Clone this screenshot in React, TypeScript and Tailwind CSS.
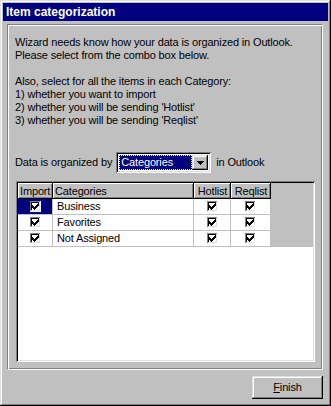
import React from "react";

const raised =
  "shadow-[inset_-1px_-1px_#000,inset_1px_1px_#dfdfdf,inset_-2px_-2px_#808080,inset_2px_2px_#fff]";
const sunken =
  "shadow-[inset_1px_1px_#808080,inset_-1px_-1px_#fff,inset_2px_2px_#000,inset_-2px_-2px_#dfdfdf]";

const Check = () => (
  <svg width="11" height="11" viewBox="0 0 11 11" shapeRendering="crispEdges">
    <rect x="0" y="0" width="11" height="11" fill="#fff" />
    <rect x="0" y="0" width="10" height="1" fill="#808080" />
    <rect x="0" y="0" width="1" height="10" fill="#808080" />
    <rect x="1" y="1" width="8" height="1" fill="#000" />
    <rect x="1" y="1" width="1" height="8" fill="#000" />
    <rect x="9" y="1" width="1" height="9" fill="#dfdfdf" />
    <rect x="1" y="9" width="9" height="1" fill="#dfdfdf" />
    <g fill="#000">
      <rect x="8" y="2" width="1" height="1" />
      <rect x="7" y="3" width="2" height="1" />
      <rect x="2" y="4" width="1" height="1" />
      <rect x="6" y="4" width="3" height="1" />
      <rect x="2" y="5" width="2" height="1" />
      <rect x="5" y="5" width="3" height="1" />
      <rect x="2" y="6" width="5" height="1" />
      <rect x="3" y="7" width="3" height="1" />
      <rect x="4" y="8" width="1" height="1" />
    </g>
  </svg>
);

const rows = ["Business", "Favorites", "Not Assigned"];

const Header = ({ label, w, center }: { label: string; w: string; center?: boolean }) => (
  <div className={`${w} h-[16px] bg-[#c0c0c0] shadow-[inset_-1px_-1px_#000,inset_1px_1px_#fff,inset_-2px_-2px_#808080] flex items-center ${center ? "justify-center" : "pl-[2px]"}`}>
    {label}
  </div>
);

export default function App() {
  return (
    <div
      className={`w-[331px] h-[406px] bg-[#c0c0c0] p-[3px] flex flex-col text-[11px] leading-[13px] tracking-[-0.15px] text-black ${raised}`}
      style={{ fontFamily: '"Liberation Sans", Arial, sans-serif' }}
    >
      <div className="h-[18px] bg-[#000080] text-white font-bold text-[12px] tracking-normal flex items-center pl-[3px]">
        Item categorization
      </div>

      <div className="mt-[3px] ml-[4px] mr-[5px] h-[346px] border border-[#808080] border-r-white border-b-white shadow-[inset_1px_1px_#fff,inset_-1px_-1px_#808080] pt-[11px] px-[7px] flex flex-col">
        <p>
          Wizard needs know how your data is organized in Outlook.
          <br />
          Please select from the combo box below.
        </p>
        <p className="mt-[13px]">
          Also, select for all the items in each Category:
          <br />
          1) whether you want to import
          <br />
          2) whether you will be sending 'Hotlist'
          <br />
          3) whether you will be sending 'Reqlist'
        </p>

        <div className="mt-[25px] flex items-center gap-[4px]">
          <span>Data is organized by</span>
          <div className={`w-[95px] h-[21px] bg-white p-[3px] flex ${sunken}`}>
            <div className="flex-1 bg-[#000080] text-white border border-dotted border-[#ffff80] flex items-center pl-[1px]">
              Categories
            </div>
            <div className="w-[16px] bg-[#c0c0c0] flex items-center justify-center shadow-[inset_-1px_-1px_#000,inset_1px_1px_#dfdfdf,inset_-2px_-2px_#808080,inset_2px_2px_#fff]">
              <svg width="7" height="4" viewBox="0 0 7 4" shapeRendering="crispEdges">
                <polygon points="0,0 7,0 3.5,4" fill="#000" />
              </svg>
            </div>
          </div>
          <span className="ml-[1px]">in Outlook</span>
        </div>

        <div className={`mt-[8px] ml-[1px] h-[181px] bg-white p-[2px] flex flex-col ${sunken}`}>
          <div className="flex bg-[#c0c0c0]">
            <Header label="Import" w="w-[35px]" />
            <Header label="Categories" w="w-[141px]" />
            <Header label="Hotlist" w="w-[37px]" center />
            <Header label="Reqlist" w="w-[40px]" center />
            <div className="flex-1" />
          </div>
          {rows.map((r, i) => (
            <div key={r} className="flex h-[16px] bg-[#c0c0c0]">
              <div className="w-[253px] flex bg-white border-b border-[#c0c0c0]">
                <div className={`w-[35px] flex items-center justify-center border-r border-[#c0c0c0] ${i === 0 ? "bg-[#000080]" : ""}`}>
                  <Check />
                </div>
                <div className="w-[141px] flex items-center pl-[4px] border-r border-[#c0c0c0]">{r}</div>
                <div className="w-[37px] flex items-center justify-center border-r border-[#c0c0c0]">
                  <Check />
                </div>
                <div className="w-[40px] flex items-center justify-center border-r border-[#c0c0c0]">
                  <Check />
                </div>
              </div>
            </div>
          ))}
          <div className="flex-1 bg-white" />
        </div>
      </div>

      <div className="mt-[6px] mr-[5px] flex justify-end">
        <button className={`w-[71px] h-[23px] bg-[#c0c0c0] flex items-center justify-center ${raised}`}>
          <span>
            <span className="underline">F</span>inish
          </span>
        </button>
      </div>
    </div>
  );
}
